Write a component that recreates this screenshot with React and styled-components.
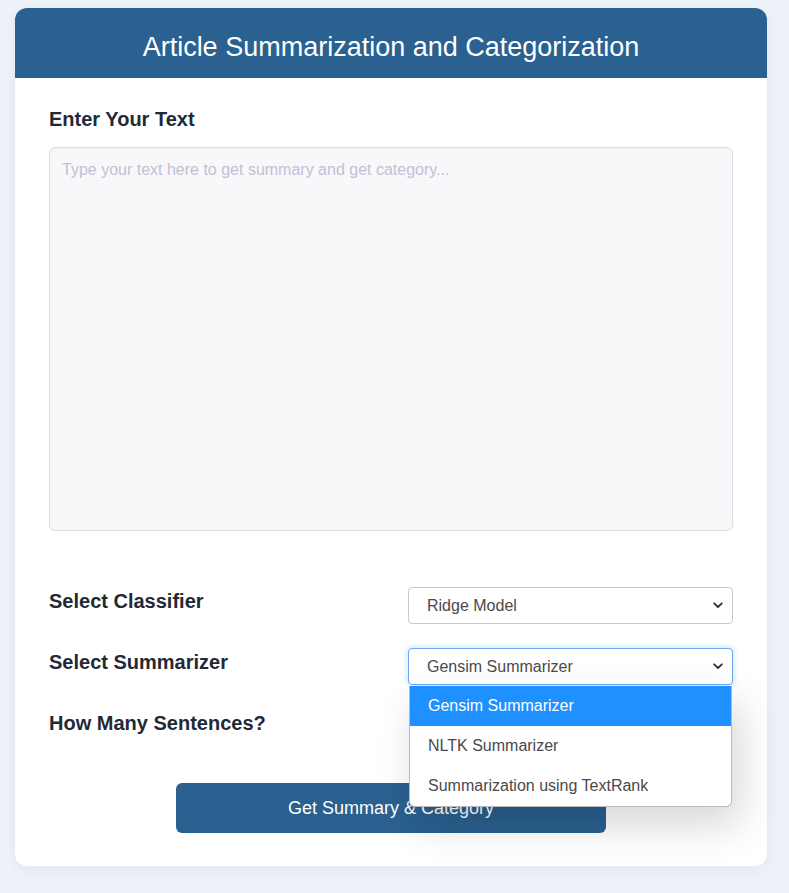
import React, { useState } from "react";
import styled, { createGlobalStyle } from "styled-components";

const GlobalStyle = createGlobalStyle`
  html, body {
    margin: 0;
    padding: 0;
    background-color: #edf1f8;
    font-family: "Liberation Sans", Arial, sans-serif;
  }
`;

const Page = styled.div`
  padding: 8px 22px 27px 15px;
`;

const Card = styled.div`
  background-color: #ffffff;
  border-radius: 12px;
  box-shadow: 0 4px 14px rgba(40, 60, 100, 0.05);
`;

const Header = styled.h1`
  margin: 0;
  box-sizing: border-box;
  height: 70px;
  padding-top: 8px;
  display: flex;
  align-items: center;
  justify-content: center;
  background-color: #2a6190;
  color: #ffffff;
  font-size: 27px;
  font-weight: normal;
  border-radius: 12px 12px 0 0;
`;

const Body = styled.div`
  padding: 30px 34px 33px 34px;
  display: flex;
  flex-direction: column;
`;

const Label = styled.label`
  font-size: 20px;
  font-weight: bold;
  color: #1f2a36;
  line-height: 23px;
  padding-top: ${(p) => p.$offset || 0}px;
`;

const TextArea = styled.textarea`
  margin-top: 16px;
  box-sizing: border-box;
  width: 100%;
  height: 384px;
  resize: none;
  background-color: #f8f8fa;
  border: 1px solid #dcdce3;
  border-radius: 6px;
  padding: 13px 12px;
  font-family: "Liberation Sans", Arial, sans-serif;
  font-size: 16px;
  color: #333;
  box-shadow: inset 0 1px 2px rgba(0, 0, 0, 0.04);

  &::placeholder {
    color: #c2c0d6;
  }
`;

const Form = styled.div`
  margin-top: 56px;
  display: flex;
  flex-direction: column;
  gap: 24px;
`;

const Row = styled.div`
  display: grid;
  grid-template-columns: 1fr 325px;
  align-items: start;
  height: 37px;
`;

const SelectWrap = styled.div`
  position: relative;
`;

const SelectBox = styled.div`
  box-sizing: border-box;
  height: 37px;
  display: flex;
  align-items: center;
  justify-content: space-between;
  padding: 0 9px 0 18px;
  border: 1px solid ${(p) => (p.$focused ? "#6aa9ee" : "#c9c9c9")};
  border-radius: 4px;
  background: #ffffff;
  box-shadow: ${(p) =>
    p.$focused ? "0 0 6px rgba(80, 150, 240, 0.35)" : "none"};
  font-size: 16px;
  color: #4a4a4a;
  cursor: pointer;
`;

const Menu = styled.ul`
  position: absolute;
  top: 38px;
  left: 1px;
  right: 1px;
  margin: 0;
  padding: 0;
  list-style: none;
  background: #ffffff;
  border-radius: 0 0 6px 6px;
  border: 1px solid #b9b9b9;
  border-top: none;
  overflow: hidden;
  box-shadow: 8px 18px 40px rgba(0, 0, 0, 0.16);
  z-index: 5;
`;

const MenuItem = styled.li`
  height: 40px;
  display: flex;
  align-items: center;
  padding-left: 18px;
  font-size: 16px;
  color: ${(p) => (p.$active ? "#ffffff" : "#4a4a4a")};
  background: ${(p) => (p.$active ? "#1e90ff" : "#ffffff")};
`;

const ButtonRow = styled.div`
  display: flex;
  padding-left: 127px;
  margin-top: 37px;
`;

const SubmitButton = styled.button`
  width: 430px;
  height: 50px;
  border: none;
  border-radius: 6px;
  background-color: #2a6190;
  color: #ffffff;
  font-family: "Liberation Sans", Arial, sans-serif;
  font-size: 18px;
  cursor: pointer;
`;

const Chevron = () => (
  <svg width="10" height="7" viewBox="0 0 10 7">
    <path
      d="M1.2 1.3 L5 5 L8.8 1.3"
      fill="none"
      stroke="#333"
      strokeWidth="1.8"
      strokeLinecap="round"
      strokeLinejoin="round"
    />
  </svg>
);

const summarizers = [
  "Gensim Summarizer",
  "NLTK Summarizer",
  "Summarization using TextRank",
];

function App() {
  const [text, setText] = useState("");
  const [summarizer] = useState(summarizers[0]);

  return (
    <Page>
      <GlobalStyle />
      <Card>
        <Header>Article Summarization and Categorization</Header>
        <Body>
          <Label>Enter Your Text</Label>
          <TextArea
            value={text}
            onChange={(e) => setText(e.target.value)}
            placeholder="Type your text here to get summary and get category..."
          />
          <Form>
            <Row>
              <Label $offset={3}>Select Classifier</Label>
              <SelectBox>
                Ridge Model
                <Chevron />
              </SelectBox>
            </Row>
            <Row>
              <Label $offset={3}>Select Summarizer</Label>
              <SelectWrap>
                <SelectBox $focused>
                  {summarizer}
                  <Chevron />
                </SelectBox>
                <Menu>
                  {summarizers.map((s) => (
                    <MenuItem key={s} $active={s === summarizer}>
                      {s}
                    </MenuItem>
                  ))}
                </Menu>
              </SelectWrap>
            </Row>
            <Row>
              <Label $offset={3}>How Many Sentences?</Label>
            </Row>
          </Form>
          <ButtonRow>
            <SubmitButton>Get Summary &amp; Category</SubmitButton>
          </ButtonRow>
        </Body>
      </Card>
    </Page>
  );
}

export default App;
